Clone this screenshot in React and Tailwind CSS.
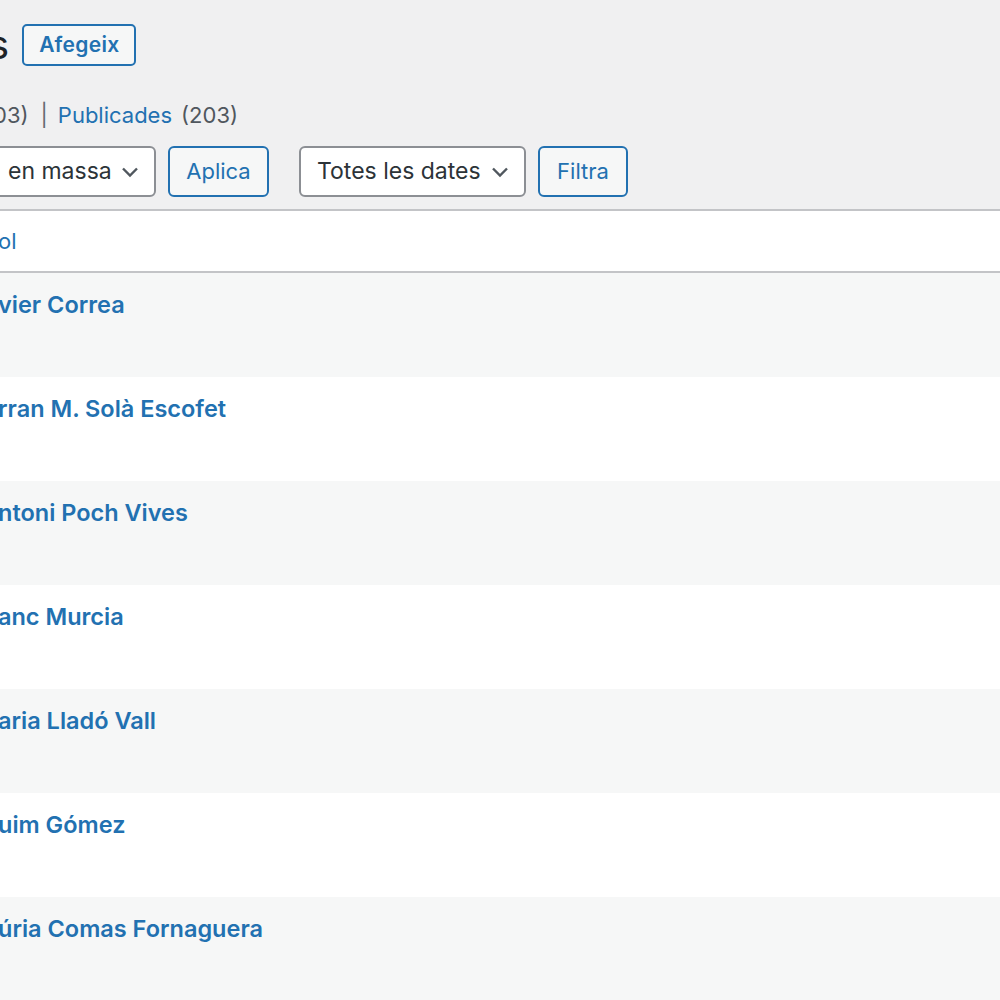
const FONT = { fontFamily: 'Inter, "Noto Sans", sans-serif' };

const ROWS = [
  'vier Correa',
  'rran M. Solà Escofet',
  'ntoni Poch Vives',
  'anc Murcia',
  'aria Lladó Vall',
  'uim Gómez',
  'úria Comas Fornaguera',
];

function Chevron() {
  return (
    <svg width="20" height="12" viewBox="0 0 20 12" className="shrink-0">
      <path d="M3 2.5l7 7 7-7" fill="none" stroke="#50575e" strokeWidth="2.4" />
    </svg>
  );
}

function Select({ children, className }) {
  return (
    <div className={`h-[51px] flex items-center justify-between bg-white border-2 border-[#8c8f94] rounded-[6px] text-[#2c3338] text-[23px] ${className}`}>
      <span>{children}</span>
      <Chevron />
    </div>
  );
}

function Button({ children, className }) {
  return (
    <div className={`h-[51px] flex items-center justify-center bg-[#f6f7f7] border-2 border-[#2271b1] rounded-[6px] text-[#2271b1] text-[22px] ${className}`}>
      {children}
    </div>
  );
}

export default function App() {
  return (
    <div style={FONT} className="w-[1000px] h-[1000px] overflow-hidden bg-[#f0f0f1]">
      {/* title */}
      <div className="flex items-center h-[42px] mt-[24px]">
        <h1 className="ml-[-12px] text-[40px] leading-none text-[#1d2327] font-normal">s</h1>
        <div className="ml-[13px] h-[42px] px-[15px] flex items-center bg-[#f6f7f7] border-2 border-[#2271b1] rounded-[5px] text-[#2271b1] text-[21px] font-semibold tracking-[0.3px]">
          Afegeix
        </div>
      </div>

      {/* status links */}
      <div className="mt-[36px] flex items-center text-[22px] leading-[26px] text-[#50575e]">
        <span className="ml-[-7px]">03)</span>
        <span className="ml-[12px] text-[#646970]">|</span>
        <span className="ml-[10px] text-[#2271b1]">Publicades</span>
        <span className="ml-[9px]">(203)</span>
      </div>

      {/* filters */}
      <div className="mt-[18px] flex items-center">
        <Select className="ml-[-20px] w-[176px] pl-[26px] pr-[14px]">en massa</Select>
        <Button className="ml-[12px] w-[101px]">Aplica</Button>
        <Select className="ml-[30px] w-[227px] pl-[16px] pr-[14px]">Totes les dates</Select>
        <Button className="ml-[12px] w-[90px]">Filtra</Button>
      </div>

      {/* table */}
      <div className="mt-[12px] border-t-2 border-[#c3c4c7] bg-white">
        <div className="h-[62px] flex items-center border-b-2 border-[#c3c4c7] text-[22px] text-[#2271b1]">
          <span className="ml-[-2px]">ol</span>
        </div>
        {ROWS.map((name, i) => (
          <div key={name} className={`h-[104px] pt-[17px] ${i % 2 === 0 ? 'bg-[#f6f7f7]' : 'bg-white'}`}>
            <span className="ml-[-2px] text-[23.5px] leading-[30px] font-semibold text-[#2271b1]">{name}</span>
          </div>
        ))}
      </div>
    </div>
  );
}
